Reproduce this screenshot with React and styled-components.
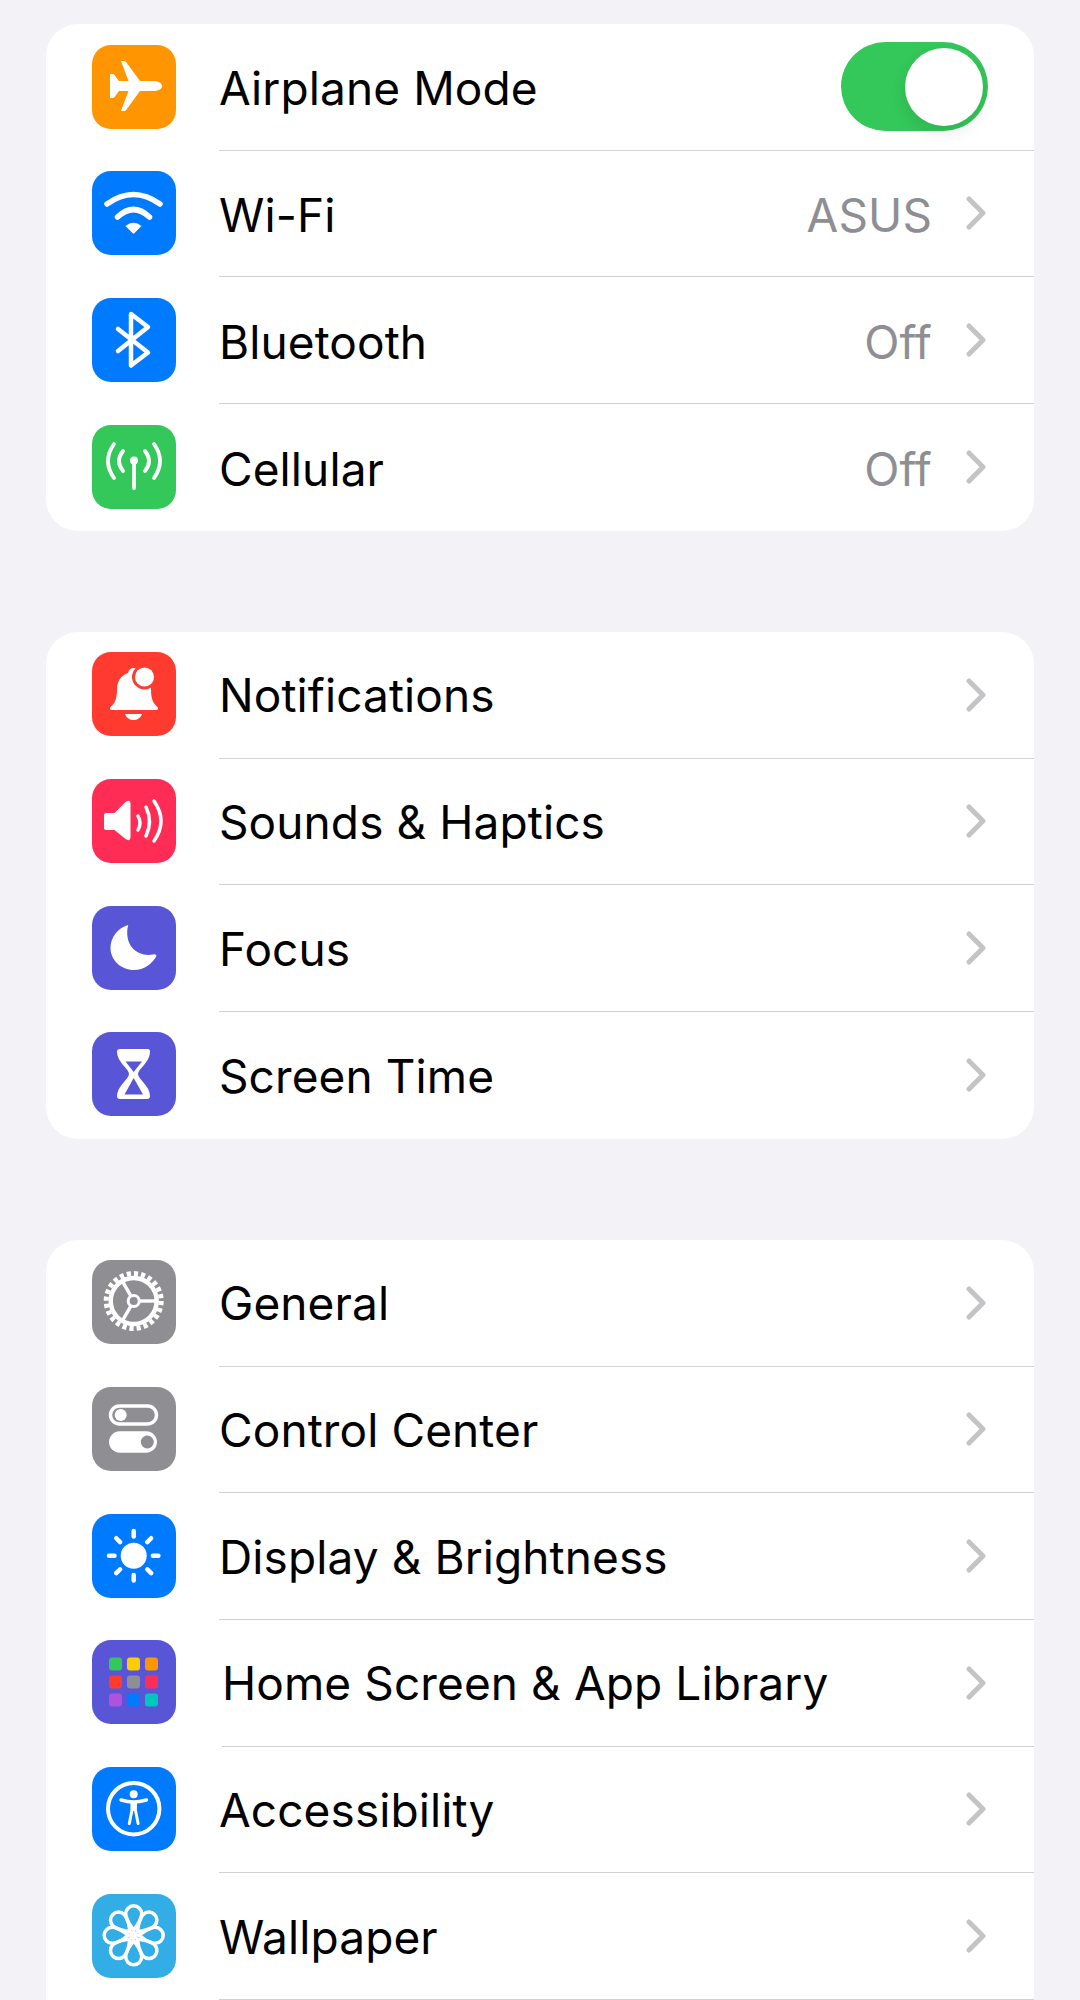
import React from "react";
import styled, { createGlobalStyle } from "styled-components";

const GlobalStyle = createGlobalStyle`
  html, body {
    margin: 0;
    padding: 0;
    background: #f2f2f7;
  }
`;

const Svg = ({ children }) => (
  <svg width="84" height="84" viewBox="0 0 84 84" fill="none">
    {children}
  </svg>
);

const AirplaneIcon = () => (
  <Svg>
    <path
      fill="#fff"
      d="M70 41c0-3-4-5-9-5H48L34.500 17.500Q33.500 16 32 16H29L36.500 36H27L22.500 30Q22 29 20.500 29H18V53H20.500Q22 53 22.500 52L27 46H36.500L29 66H32Q33.500 66 34.500 64.500L48 46H61c5 0 9-2 9-5Z"
    />
  </Svg>
);

const WifiIcon = () => (
  <Svg>
    <g stroke="#fff" strokeWidth="5.500" strokeLinecap="round">
      <path d="M15 33Q41.500 14 68 33" />
      <path d="M25.500 46Q41.500 31 57.500 46" />
    </g>
    <path fill="#fff" d="M33.500 55Q41.500 48.500 49.500 55L42.500 62Q41.500 63 40.500 62Z" />
  </Svg>
);

const BluetoothIcon = () => (
  <Svg>
    <path
      stroke="#fff"
      strokeWidth="4.500"
      strokeLinecap="round"
      strokeLinejoin="round"
      d="M26 31L56 54.500L39 67.500V16L56 29L26 53"
    />
  </Svg>
);

const CellularIcon = () => (
  <Svg>
    <g stroke="#fff" strokeWidth="3.800" strokeLinecap="round">
      <path d="M42 36V63" />
      <path d="M22 19Q10 36 22 53" />
      <path d="M31 26Q23 36 31 46" />
      <path d="M62 19Q74 36 62 53" />
      <path d="M53 26Q61 36 53 46" />
    </g>
    <circle cx="42" cy="35.500" r="4" fill="#fff" />
  </Svg>
);

const BellIcon = () => (
  <Svg>
    <path
      fill="#fff"
      d="M41.500 16c-3 0-5 2-5.500 5C28 24 25 30 25 38C25 48 22 52 18.500 55Q17 58 20 58H64Q67 58 65.500 55C62 52 59 48 59 38C59 30 55 24 47 21C46.500 18 44.500 16 41.500 16Z"
    />
    <path fill="#fff" d="M33 62H50C48.500 66 45 68 41.500 68C38 68 34.500 66 33 62Z" />
    <circle cx="52.500" cy="25" r="12.500" fill="#ff3b30" />
    <circle cx="52.500" cy="25" r="9.500" fill="#fff" />
  </Svg>
);

const SoundIcon = () => (
  <Svg>
    <path
      fill="#fff"
      d="M14 34H22.500L33.500 23Q38.500 19.500 38.500 25V58Q38.500 63 33.500 60L22.500 51H14Q12 51 12 49V36Q12 34 14 34Z"
    />
    <g stroke="#fff" strokeWidth="3.500" strokeLinecap="round">
      <path d="M46 37Q50 44 46 51" />
      <path d="M54 28Q61 42.500 54 57" />
      <path d="M62 22Q76 42 62 62" />
    </g>
  </Svg>
);

const MoonIcon = () => (
  <Svg>
    <path
      fill="#fff"
      d="M36 19C26 22 18.500 31 18.500 42C18.500 54 29 64 42 64C52 64 60 58 64.500 50Q64 47.500 61 48.500C46 51 33 41 35.500 22Q36.500 19 36 19Z"
    />
  </Svg>
);

const HourglassIcon = () => (
  <Svg>
    <path
      fill="#fff"
      d="M28 17H56Q58 17 58 20C58 30 46 37 46 42C46 47 58 54 58 64Q58 67 55 67H28Q25 67 25 64C25 54 37 47 37 42C37 37 25 30 25 20Q25 17 28 17Z"
    />
    <path fill="#5856d6" d="M33.500 29.500H50L41.700 40Z" />
    <path fill="#5856d6" d="M41.700 46L51 62.500H32.500Z" />
  </Svg>
);

const GearIcon = () => (
  <Svg>
    <circle cx="41.700" cy="41" r="27.500" stroke="#fff" strokeWidth="5" strokeDasharray="4.200 3" />
    <circle cx="41.700" cy="41" r="23" stroke="#fff" strokeWidth="4.500" />
    <circle cx="41.700" cy="41" r="5.500" stroke="#fff" strokeWidth="3" />
    <g stroke="#fff" strokeWidth="3.400">
      <path d="M47.200 41H65" />
      <path d="M39 36.200L29.700 20.200" />
      <path d="M39 45.800L29.700 61.800" />
    </g>
  </Svg>
);

const SwitchesIcon = () => (
  <Svg>
    <rect x="18.500" y="19" width="46" height="18" rx="9" stroke="#fff" strokeWidth="3.500" />
    <circle cx="28.700" cy="28" r="6" fill="#fff" />
    <rect x="17" y="44.300" width="48" height="21.400" rx="10.700" fill="#fff" />
    <circle cx="55.300" cy="55" r="6.500" fill="#8e8e93" />
  </Svg>
);

const SunIcon = () => (
  <Svg>
    <circle cx="41.700" cy="41.700" r="13" fill="#fff" />
    <g stroke="#fff" strokeWidth="4.500" strokeLinecap="round">
      {[0, 45, 90, 135, 180, 225, 270, 315].map((deg) => (
        <path key={deg} d="M41.700 17V22.500" transform={`rotate(${deg} 41.700 41.700)`} />
      ))}
    </g>
  </Svg>
);

const appColors = [
  "#34c759", "#ffcc00", "#ff9500",
  "#ff3b30", "#8e8e93", "#ff2d55",
  "#af52de", "#007aff", "#00c7be",
];

const GridIcon = () => (
  <Svg>
    {appColors.map((color, i) => (
      <rect
        key={color}
        x={17 + (i % 3) * 18}
        y={17.5 + Math.floor(i / 3) * 18}
        width="13"
        height="13"
        rx="3"
        fill={color}
      />
    ))}
  </Svg>
);

const AccessibilityIcon = () => (
  <Svg>
    <circle cx="41.700" cy="41.700" r="25.700" stroke="#fff" strokeWidth="4" />
    <circle cx="41.700" cy="27.300" r="4" fill="#fff" />
    <g stroke="#fff" strokeLinecap="round">
      <path strokeWidth="3.400" d="M29 33Q36 35 41.700 35Q47 35 54.500 33" />
      <path strokeWidth="6.500" strokeLinecap="butt" d="M41.700 35V44" />
      <path strokeWidth="3" d="M39.800 44L37.300 56.500M43.600 44L46.100 56.500" />
    </g>
  </Svg>
);

const FlowerIcon = () => (
  <Svg>
    <g transform="translate(41.700 41.300)" stroke="#fff" strokeWidth="3.500">
      {[0, 45, 90, 135, 180, 225, 270, 315].map((deg) => (
        <path
          key={deg}
          transform={`rotate(${deg})`}
          d="M0-5C-2-9-8-14-8-21.500A8 8 0 0 1 8-21.500C8-14 2-9 0-5Z"
        />
      ))}
    </g>
    <circle cx="41.700" cy="41.300" r="4" fill="#fff" />
  </Svg>
);

const Chevron = () => (
  <ChevronSvg viewBox="0 0 20 34" fill="none">
    <path
      d="M3 3L17 17L3 31"
      stroke="#c4c4c7"
      strokeWidth="5"
      strokeLinecap="round"
      strokeLinejoin="round"
    />
  </ChevronSvg>
);

const groups = [
  {
    nudged: true,
    rows: [
      { label: "Airplane Mode", bg: "#ff9500", Icon: AirplaneIcon, toggle: true },
      { label: "Wi-Fi", bg: "#007aff", Icon: WifiIcon, value: "ASUS" },
      { label: "Bluetooth", bg: "#007aff", Icon: BluetoothIcon, value: "Off" },
      { label: "Cellular", bg: "#34c759", Icon: CellularIcon, value: "Off" },
    ],
  },
  {
    rows: [
      { label: "Notifications", bg: "#ff3b30", Icon: BellIcon },
      { label: "Sounds & Haptics", bg: "#ff2d55", Icon: SoundIcon },
      { label: "Focus", bg: "#5856d6", Icon: MoonIcon },
      { label: "Screen Time", bg: "#5856d6", Icon: HourglassIcon },
    ],
  },
  {
    // runs past the bottom of the screen
    open: true,
    rows: [
      { label: "General", bg: "#8e8e93", Icon: GearIcon },
      { label: "Control Center", bg: "#8e8e93", Icon: SwitchesIcon },
      { label: "Display & Brightness", bg: "#007aff", Icon: SunIcon },
      { label: "Home Screen & App Library", bg: "#5856d6", Icon: GridIcon, shifted: true },
      { label: "Accessibility", bg: "#007aff", Icon: AccessibilityIcon },
      { label: "Wallpaper", bg: "#32ade6", Icon: FlowerIcon },
    ],
  },
];

const App = () => (
  <Page>
    <GlobalStyle />
    {groups.map(({ rows, nudged, open }) => (
      <Card key={rows[0].label} $open={open}>
        {rows.map(({ label, bg, Icon, value, toggle, shifted }) => (
          <Row key={label}>
            <IconTile $bg={bg} $nudged={nudged}>
              <Icon />
            </IconTile>
            <RowBody $shifted={shifted} $open={open}>
              <Label $nudged={nudged}>{label}</Label>
              {value && <Value>{value}</Value>}
              {toggle ? (
                <Toggle>
                  <Knob />
                </Toggle>
              ) : (
                <Chevron />
              )}
            </RowBody>
          </Row>
        ))}
      </Card>
    ))}
  </Page>
);

export default App;

const Page = styled.div`
  height: 2000px;
  overflow: hidden;
  box-sizing: border-box;
  padding: 24px 46px 0;
  display: flex;
  flex-direction: column;
  gap: 101.33px;
  background: #f2f2f7;
  font-family: Inter, "Liberation Sans", sans-serif;
`;

const Card = styled.div`
  flex: none;
  background: #fff;
  border-radius: ${(p) => (p.$open ? "32px 32px 0 0" : "32px")};
`;

const Row = styled.div`
  height: 126.67px;
  box-sizing: border-box;
  display: flex;
  align-items: center;
  padding-left: 46px;
`;

const IconTile = styled.div`
  flex: none;
  width: 84px;
  height: 84px;
  border-radius: 19px;
  background: ${(p) => p.$bg};
  margin-top: ${(p) => (p.$nudged ? "-1px" : "-2px")};
`;

const RowBody = styled.div`
  flex: 1;
  align-self: stretch;
  min-width: 0;
  display: flex;
  align-items: center;
  margin-left: ${(p) => (p.$shifted ? "46px" : "43px")};
  padding-right: 48px;
  border-bottom: 1px solid #d2d2d5;
  ${Row}:last-child & {
    border-bottom: ${(p) => (p.$open ? "1px solid #d2d2d5" : "none")};
  }
`;

const Label = styled.div`
  flex: 1;
  font-size: 46px;
  letter-spacing: 0.1px;
  color: #000;
  padding-top: ${(p) => (p.$nudged ? "3px" : "1px")};
`;

const Value = styled.div`
  font-size: 46px;
  letter-spacing: 0.1px;
  color: #8e8e93;
  margin-right: 34px;
  padding-top: 3px;
`;

const ChevronSvg = styled.svg`
  flex: none;
  width: 20px;
  height: 34px;
`;

const Toggle = styled.div`
  flex: none;
  width: 147px;
  height: 89px;
  margin-right: -2px;
  box-sizing: border-box;
  display: flex;
  align-items: center;
  justify-content: flex-end;
  padding-right: 5px;
  border-radius: 45px;
  background: #34c759;
`;

const Knob = styled.div`
  width: 78px;
  height: 78px;
  border-radius: 50%;
  background: #fff;
  box-shadow: 0 6px 16px rgba(0, 0, 0, 0.1);
`;
